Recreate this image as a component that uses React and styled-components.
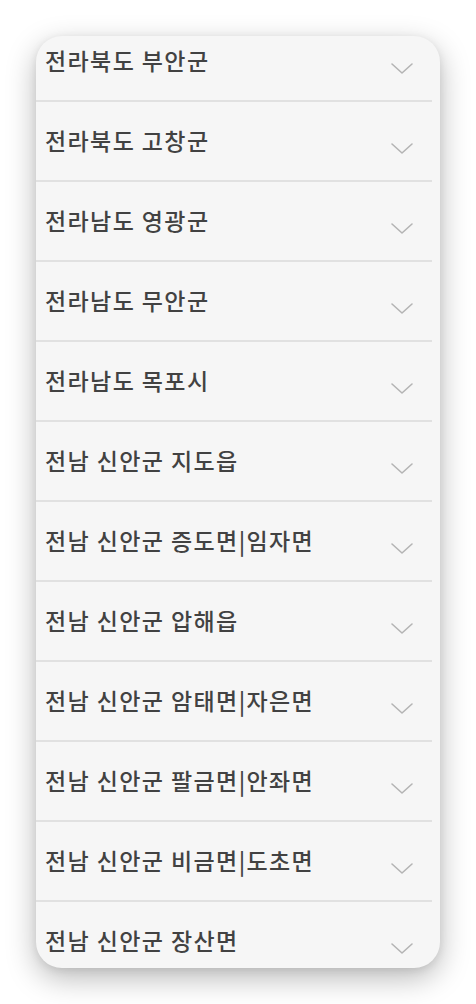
import React from "react";
import styled, { createGlobalStyle } from "styled-components";

const Global = createGlobalStyle`
  html, body { margin: 0; padding: 0; background: #ffffff; }
  body { font-family: "Noto Sans CJK KR", "Noto Sans", sans-serif; }
`;

const Page = styled.div`
  width: 476px;
  height: 1004px;
  padding: 36px 0 0 36px;
  box-sizing: border-box;
  background: #ffffff;
`;

const Card = styled.div`
  width: 404px;
  height: 932px;
  border-radius: 26px;
  overflow: hidden;
  background: #f6f6f6;
  box-shadow: 0 10px 30px rgba(0, 0, 0, 0.28), 0 2px 8px rgba(0, 0, 0, 0.08);
`;

const List = styled.ul`
  list-style: none;
  margin: -14px 0 0 0;
  padding: 0;
  width: 396px;
`;

const Row = styled.li`
  display: flex;
  justify-content: space-between;
  align-items: flex-start;
  height: 80px;
  box-sizing: border-box;
  padding: 24px 18px 0 9px;
  border-bottom: 2px solid #e1e1e1;
`;

const Label = styled.span`
  font-family: "Noto Sans CJK KR", "Noto Sans", sans-serif;
  font-size: 23px;
  font-weight: 500;
  line-height: 28px;
  color: #424242;
  letter-spacing: 1.4px;
  white-space: nowrap;
`;

const Chevron = styled.svg`
  width: 24px;
  height: 13px;
  margin-top: 16px;
  flex-shrink: 0;
`;

const items = [
  "전라북도 부안군",
  "전라북도 고창군",
  "전라남도 영광군",
  "전라남도 무안군",
  "전라남도 목포시",
  "전남 신안군 지도읍",
  "전남 신안군 증도면|임자면",
  "전남 신안군 압해읍",
  "전남 신안군 암태면|자은면",
  "전남 신안군 팔금면|안좌면",
  "전남 신안군 비금면|도초면",
  "전남 신안군 장산면",
];

export default function App() {
  return (
    <Page>
      <Global />
      <Card>
        <List>
          {items.map((t) => (
            <Row key={t}>
              <Label>{t}</Label>
              <Chevron viewBox="0 0 24 13" fill="none">
                <path d="M2 2 L12 11 L22 2" stroke="#b4b4b4" strokeWidth="1.6" strokeLinecap="round" strokeLinejoin="round" />
              </Chevron>
            </Row>
          ))}
        </List>
      </Card>
    </Page>
  );
}
